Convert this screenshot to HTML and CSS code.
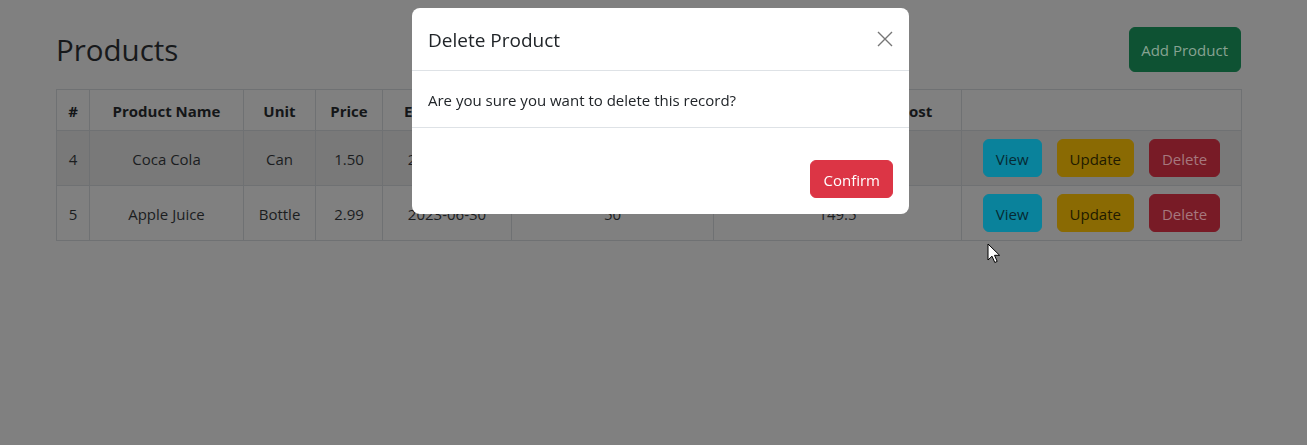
FILE: index.html
```html
<!DOCTYPE html>
<html lang="en">
<head>
<meta charset="utf-8">
<title>Products</title>
<link rel="stylesheet" href="styles.css">
</head>
<body>
<div class="page">
  <div class="toolbar">
    <h2 class="title">Products</h2>
    <button class="btn btn-add" type="button">Add Product</button>
  </div>
  <table class="table">
    <colgroup>
      <col class="c-id"><col class="c-name"><col class="c-unit"><col class="c-price"><col class="c-exp"><col class="c-qty"><col class="c-cost"><col class="c-act">
    </colgroup>
    <thead>
      <tr>
        <th>#</th><th>Product Name</th><th>Unit</th><th>Price</th><th>Expiry Date</th><th>Quantity</th><th>Estimated Inventory Cost</th><th></th>
      </tr>
    </thead>
    <tbody>
      <tr class="odd">
        <td>4</td><td>Coca Cola</td><td>Can</td><td>1.50</td><td>2023-07-15</td><td>100</td><td>150</td>
        <td class="act"><div class="actions"><button class="btn btn-view" type="button">View</button><button class="btn btn-update" type="button">Update</button><button class="btn btn-delete" type="button">Delete</button></div></td>
      </tr>
      <tr>
        <td>5</td><td>Apple Juice</td><td>Bottle</td><td>2.99</td><td>2023-06-30</td><td>50</td><td>149.5</td>
        <td class="act"><div class="actions"><button class="btn btn-view" type="button">View</button><button class="btn btn-update" type="button">Update</button><button class="btn btn-delete" type="button">Delete</button></div></td>
      </tr>
    </tbody>
  </table>
</div>

<div class="modal-layer">
  <div class="modal">
    <div class="modal-header">
      <h5 class="modal-title">Delete Product</h5>
      <button class="btn-close" type="button" aria-label="Close">
        <svg width="16" height="16" viewBox="0 0 16 16"><path d="M1 1L15 15M15 1L1 15" stroke="currentColor" stroke-width="1.4" fill="none"/></svg>
      </button>
    </div>
    <div class="modal-body">Are you sure you want to delete this record?</div>
    <div class="modal-footer">
      <button class="btn btn-confirm" type="button">Confirm</button>
    </div>
  </div>
</div>

<svg class="cursor" width="14" height="22" viewBox="0 0 14 22"><path d="M1 1 L1 17 L5 13.2 L7.8 19.5 L10.2 18.4 L7.5 12.3 L12.6 12.3 Z" fill="#fff" stroke="#000" stroke-width="1" stroke-linejoin="round"/></svg>
</body>
</html>
```
FILE: styles.css
```css
html, body {
  margin: 0;
  padding: 0;
  background: #808080;
}
body {
  font-family: "Open Sans", "Noto Sans", sans-serif;
  font-size: 15px;
  line-height: 24px;
  color: #1b1d1f;
  height: 445px;
  overflow: hidden;
}
.page {
  width: 1185px;
  margin-left: 56px;
  padding-top: 27px;
}
.toolbar {
  display: flex;
  justify-content: space-between;
  align-items: center;
  margin-bottom: 17px;
}
.title {
  margin: 0;
  font-size: 29.5px;
  font-weight: 400;
  line-height: 40px;
  color: #17191b;
}
.btn {
  font-family: inherit;
  font-size: 15px;
  line-height: 24px;
  border: 1px solid transparent;
  border-radius: 6px;
  padding: 7px 12px 5px;
  cursor: pointer;
}
.btn-add {
  background: #0e5233;
  border-color: #0e5233;
  color: #87a292;
  padding: 10px 12px 8px 11px;
  line-height: 25px;
}
.table {
  border-collapse: collapse;
  table-layout: fixed;
  width: 1185px;
  border: 1px solid #6f7173;
}
.c-id { width: 33px; }
.c-name { width: 154px; }
.c-unit { width: 72px; }
.c-price { width: 67px; }
.c-exp { width: 129px; }
.c-qty { width: 202px; }
.c-cost { width: 248px; }
.c-act { width: 280px; }
.table th, .table td {
  border: 1px solid #6f7173;
  padding: 9px 8px 7px;
  text-align: center;
  vertical-align: middle;
  white-space: nowrap;
}
.table td.act {
  padding: 8px 8px;
}
.table th {
  font-weight: 700;
  color: #141618;
}
.table tr.odd td {
  background: #797979;
}
.actions {
  display: flex;
  justify-content: center;
  gap: 15px;
}
.btn-view {
  background: #0a829b;
  border-color: #0a829b;
  color: #062a33;
}
.btn-update {
  background: #8a6a03;
  border-color: #8a6a03;
  color: #211a00;
}
.btn-delete {
  background: #781b26;
  border-color: #781b26;
  color: #a6787e;
}
.modal-layer {
  position: fixed;
  inset: 0;
  display: flex;
  align-items: flex-start;
  padding: 8px 0 0 412px;
}
.modal {
  width: 497px;
  background: #fff;
  border-radius: 8px;
  color: #212529;
  overflow: hidden;
}
.modal-header {
  display: flex;
  justify-content: space-between;
  align-items: center;
  padding: 17px 16px 15px;
  border-bottom: 1px solid #dee2e6;
}
.modal-title {
  margin: 0;
  font-size: 19px;
  font-weight: 400;
  line-height: 30px;
}
.btn-close {
  width: 16px;
  height: 16px;
  padding: 0;
  border: 0;
  background: transparent;
  color: #767676;
  display: flex;
  margin-top: -2px;
}
.modal-body {
  padding: 17px 16px 15px;
  border-bottom: 1px solid #dee2e6;
}
.modal-footer {
  display: flex;
  justify-content: flex-end;
  padding: 32px 16px 16px;
}
.btn-confirm {
  background: #dc3545;
  border-color: #dc3545;
  color: #fff;
}
.cursor {
  position: absolute;
  left: 987px;
  top: 243px;
}
```
